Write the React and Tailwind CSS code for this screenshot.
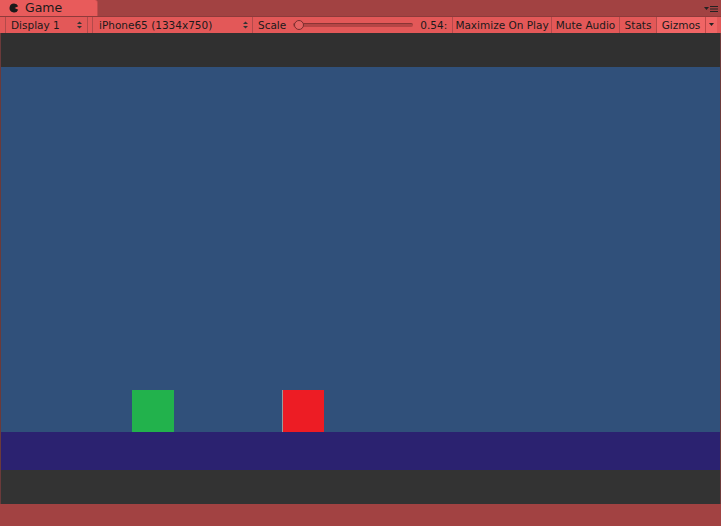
import React from "react";

function Sep() {
  return <div className="w-px self-stretch bg-[#b34a4a]" />;
}

function UpDown() {
  return (
    <svg width="5" height="8" viewBox="0 0 5 8">
      <path d="M0 3h5L2.5 0.5z" fill="#333" />
      <path d="M0 5h5L2.5 7.5z" fill="#333" />
    </svg>
  );
}

export default function App() {
  return (
    <div
      className="w-[721px] h-[526px] flex flex-col bg-[#a24242] overflow-hidden text-[#1a1a1a]"
      style={{ fontFamily: '"DejaVu Sans", sans-serif' }}
    >
      {/* Tab bar */}
      <div className="h-[16px] flex items-end relative">
        <div className="w-[98px] h-[16px] bg-[#e85b5b] rounded-tr-[3px] flex items-center pl-[9px] gap-[6px] border-r border-[#c24c4c]">
          <svg width="10" height="10" viewBox="0 0 10 10">
            <path d="M5 0.5a4.5 4.5 0 1 0 4.2 6.2L5.6 5 9.2 3.3A4.5 4.5 0 0 0 5 0.5z" fill="#1a1a1a" />
          </svg>
          <span className="text-[12.5px] leading-none">Game</span>
        </div>
        <div className="absolute right-[3px] top-[6px] flex items-center gap-[1px]">
          <svg width="5" height="4" viewBox="0 0 5 4"><path d="M0 0h5L2.5 3z" fill="#222" /></svg>
          <svg width="8" height="6" viewBox="0 0 8 6">
            <rect x="0" y="0" width="8" height="1" fill="#222" />
            <rect x="0" y="2.5" width="8" height="1" fill="#222" />
            <rect x="0" y="5" width="8" height="1" fill="#222" />
          </svg>
        </div>
      </div>
      {/* Toolbar */}
      <div className="h-[17px] flex items-stretch bg-[#e35858] border-t border-[#8f3a3a] text-[10.5px] leading-none">
        <div className="w-[5px]" />
        <Sep />
        <div className="w-[81px] flex items-center justify-between pl-[5px] pr-[5px]">
          <span>Display 1</span>
          <UpDown />
        </div>
        <Sep />
        <div className="w-[4px]" />
        <Sep />
        <div className="w-[159px] flex items-center justify-between pl-[6px] pr-[4px]">
          <span>iPhone65 (1334x750)</span>
          <UpDown />
        </div>
        <Sep />
        <div className="w-[199px] flex items-center pl-[5px]">
          <span>Scale</span>
          <div className="ml-[7px] w-[120px] h-[10px] relative flex items-center">
            <div className="w-full h-[4px] rounded-full bg-[#b54545] border-t border-[#8a3434]" />
            <div className="absolute left-[1px] top-0 w-[10px] h-[10px] rounded-full bg-[#e56262] border border-[#7a2e2e]" />
          </div>
          <span className="ml-[7px]">0.54:</span>
        </div>
        <Sep />
        <div className="w-[98px] flex items-center justify-center">Maximize On Play</div>
        <Sep />
        <div className="w-[67px] flex items-center justify-center">Mute Audio</div>
        <Sep />
        <div className="w-[36px] flex items-center justify-center">Stats</div>
        <Sep />
        <div className="w-[48px] flex items-center justify-center bg-[#f06565]">Gizmos</div>
        <div className="w-px self-stretch bg-[#c04848]" />
        <div className="w-[11px] flex items-center justify-center bg-[#f06565]">
          <svg width="5" height="4" viewBox="0 0 5 4"><path d="M0 0h5L2.5 3z" fill="#222" /></svg>
        </div>
        <div className="flex-1" />
      </div>
      {/* Game view */}
      <div className="h-[471px] flex flex-col border-x border-[#6b3a3a] bg-[#323232]">
        <div className="h-[34px] bg-[#303030]" />
        <div className="h-[365px] bg-[#30507a] relative">
          <div className="absolute left-[131px] bottom-0 w-[42px] h-[42px] bg-[#22b24c]" />
          <div className="absolute left-[281px] bottom-0 w-[42px] h-[42px] bg-[#ed1c24] border-l border-[#9a9a9a]" />
        </div>
        <div className="h-[38px] bg-[#2b2270]" />
        <div className="flex-1 bg-[#333333]" />
      </div>
      <div className="flex-1 bg-[#a24242]" />
    </div>
  );
}
